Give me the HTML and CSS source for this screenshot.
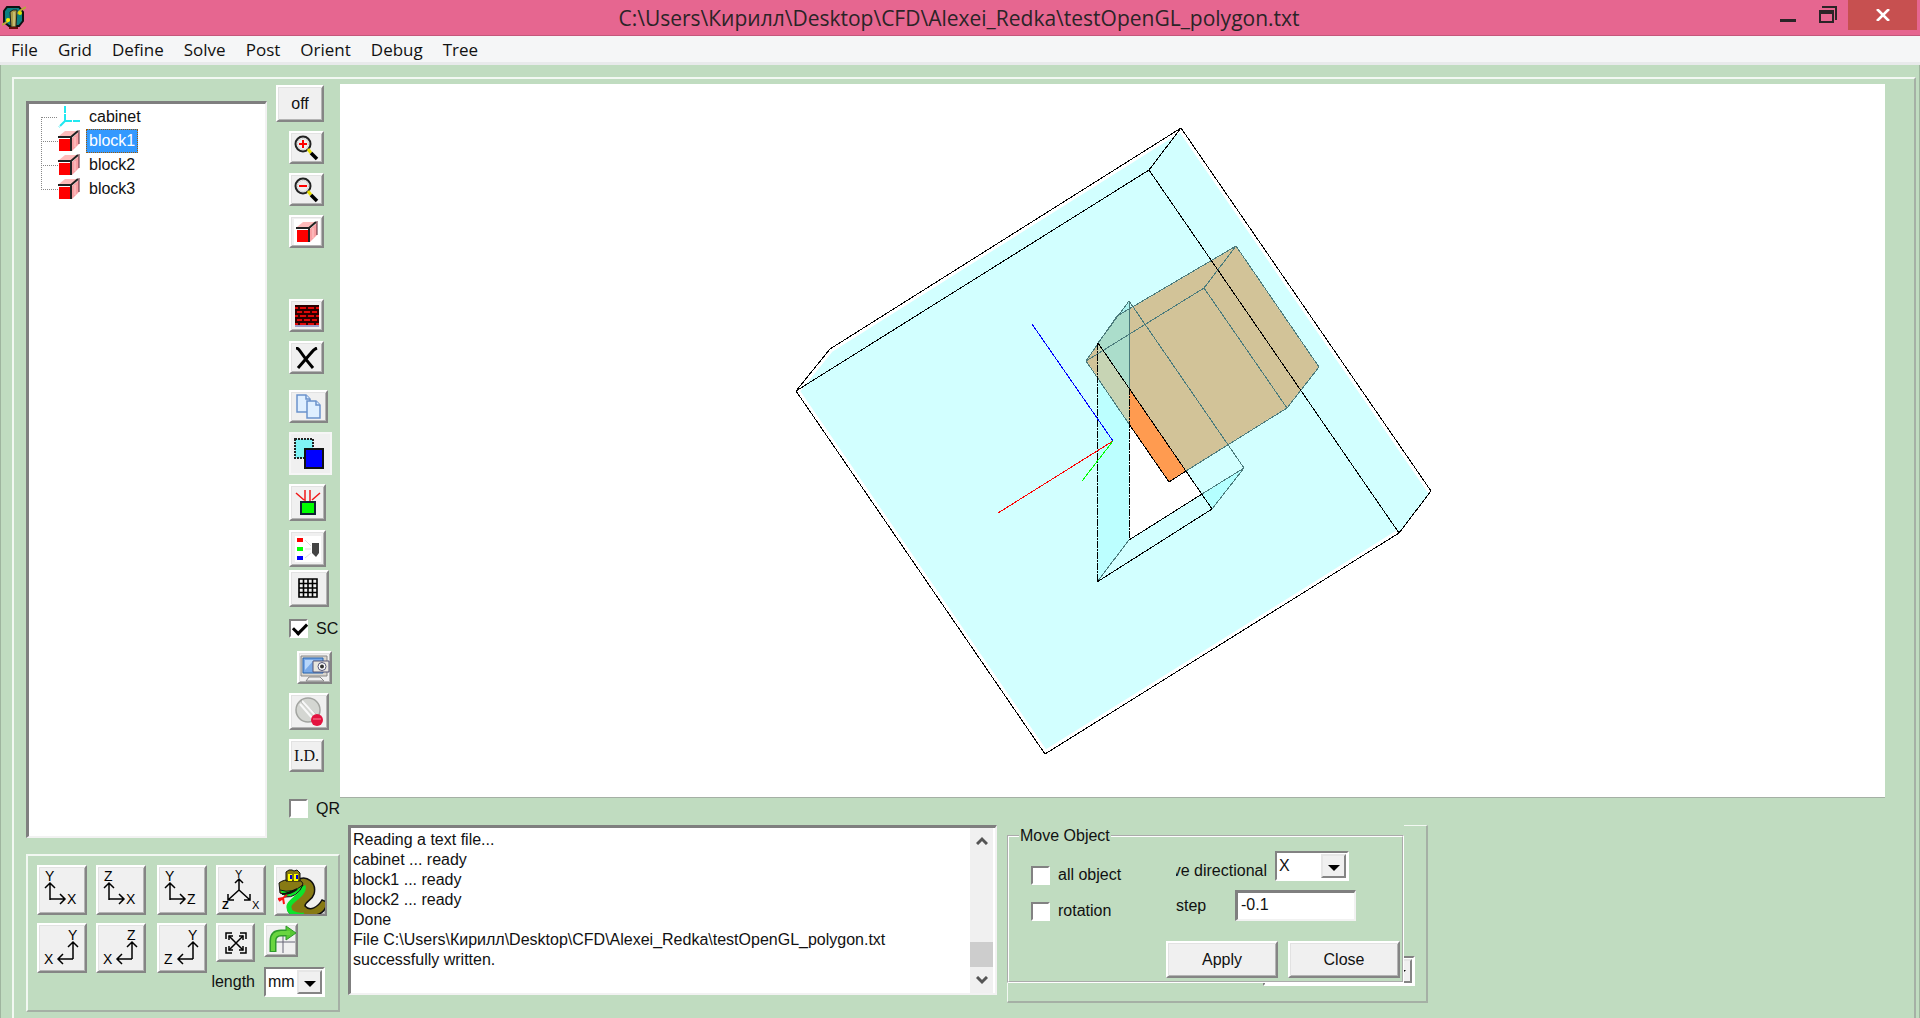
FILE: index.html
```html
<!DOCTYPE html>
<html lang="en">
<head>
<meta charset="utf-8">
<title>C:\Users\Кирилл\Desktop\CFD\Alexei_Redka\testOpenGL_polygon.txt</title>
<link rel="stylesheet" href="styles.css">
</head>
<body>
<svg class="defs" width="0" height="0" aria-hidden="true">
  <defs>
    <symbol id="cube" viewBox="0 0 22 22">
      <path d="M1 6 7 1h14l-6 5z" fill="#fbb"/>
      <path d="M14 8l7-6v12l-7 7z" fill="#f9a0a4"/>
      <path d="M17 7v10" stroke="#fcc" stroke-width="1"/>
      <path d="M1 9h11v12H1z" fill="#f00"/>
      <path d="M0 7h13v14M13 7l7-6" fill="none" stroke="#222" stroke-width="2"/>
      <path d="M21 0v14" stroke="#5a2030"/>
    </symbol>
    <symbol id="lens" viewBox="0 0 26 26">
      <circle cx="9" cy="9" r="7.500" fill="#eee" stroke="#222" stroke-width="2"/>
      <circle cx="9" cy="9" r="5.500" fill="none" stroke="#bbb" stroke-dasharray="1 1"/>
      <path d="M14 14l3 4" stroke="#e8e000" stroke-width="3"/>
      <path d="M17 18l6 6" stroke="#000" stroke-width="3.500"/>
    </symbol>
  </defs>
</svg>

<header class="titlebar">
  <svg class="app-icon" viewBox="0 0 24 24" aria-hidden="true">
    <path d="M5 2h12l4 5v9l-4 5H7l-5-4V6z" fill="#0b7f80" stroke="#111" stroke-width="2"/>
    <path d="M0 20l5-3 14-12 5-3" stroke="#b9a93a" stroke-width="2" fill="none"/>
    <path d="M8 7l3-2h4l-1 17H9z" fill="#a89a48" stroke="#222"/>
    <path d="M12 7v14" stroke="#e6dc9a"/>
    <circle cx="6" cy="15" r="2" fill="#f4f400"/><circle cx="18" cy="8" r="2" fill="#dde000"/>
    <path d="M7 22h9v2H7z" fill="#6b0d0d"/>
  </svg>
  <h1 class="title">C:\Users\Кирилл\Desktop\CFD\Alexei_Redka\testOpenGL_polygon.txt</h1>
  <div class="window-buttons">
    <button class="win" aria-label="Minimize"><svg width="18" height="16"><path d="M1 12h16v3H1z" fill="#2b2427"/></svg></button>
    <button class="win" aria-label="Restore"><svg width="20" height="18"><path d="M4 1h14v13" fill="none" stroke="#2b2427" stroke-width="2"/><path d="M2 5h13v11H2z" fill="none" stroke="#2b2427" stroke-width="2"/><path d="M1 4h15v4H1z" fill="#2b2427"/></svg></button>
    <button class="win win-close" aria-label="Close window"><svg width="14" height="12"><path d="M1 0l12 12M13 0L1 12" stroke="#fff" stroke-width="2.600"/></svg></button>
  </div>
</header>

<nav class="menubar">
  <a href="#">File</a><a href="#">Grid</a><a href="#">Define</a><a href="#">Solve</a><a href="#">Post</a><a href="#">Orient</a><a href="#">Debug</a><a href="#">Tree</a>
</nav>

<main class="workspace">
  <div class="frame">
    <section class="left">
      <div class="upper">
        <ul class="tree">
          <li><svg class="node-icon" viewBox="0 0 22 22"><path d="M7 0v15M7 15h15M7 15l-6 6" stroke="#22e8f0" stroke-width="2" stroke-dasharray="7 1" fill="none"/></svg><span>cabinet</span></li>
          <li><svg class="node-icon"><use href="#cube"/></svg><span class="selected">block1</span></li>
          <li><svg class="node-icon"><use href="#cube"/></svg><span>block2</span></li>
          <li><svg class="node-icon"><use href="#cube"/></svg><span>block3</span></li>
        </ul>
        <div class="tools">
          <button class="btn off">off</button>
          <button class="btn tool" aria-label="Zoom in"><svg width="26" height="26"><use href="#lens"/><path d="M5 9h8M9 5v8" stroke="#f00" stroke-width="2"/></svg></button>
          <button class="btn tool" aria-label="Zoom out"><svg width="26" height="26"><use href="#lens"/><path d="M5 9h8" stroke="#f00" stroke-width="2"/></svg></button>
          <button class="btn tool" aria-label="Block"><svg class="white" width="26" height="26" viewBox="-2 -2 26 26"><use href="#cube" width="22" height="22"/></svg></button>
          <button class="btn tool group" aria-label="Wall"><svg width="24" height="22" viewBox="0 0 24 22"><path d="M0 0h24v20H0z" fill="#e00808"/><path d="M0 1h24M0 5h24M0 9h24M0 13h24M0 17h24M4 1v4M12 1v4M20 1v4M1 5v4M8 5v4M16 5v4M4 9v4M12 9v4M20 9v4M1 13v4M8 13v4M16 13v4M23 5v4M23 13v4M4 17v3M12 17v3M20 17v3" stroke="#2a0000" stroke-width="1.800"/><path d="M0 21h24" stroke="#4848a0"/></svg></button>
          <button class="btn tool" aria-label="Delete"><svg width="24" height="22"><path d="M1 1q2 0 4 3 6 9 13 17M22 1q-3 1-6 5L3 21" fill="none" stroke="#000" stroke-width="3"/></svg></button>
          <button class="btn tool copy" aria-label="Copy"><svg width="26" height="26" viewBox="0 0 26 26"><g fill="#dfefff" stroke="#6b93cc" stroke-width="1.500"><path d="M1 1h9l4 4v13H1z"/><path d="M10 1v4h4"/><path d="M11 7h9l4 4v13H11z"/><path d="M20 7v4h4"/></g></svg></button>
          <button class="btn tool swap" aria-label="Move object"><svg width="34" height="34" viewBox="0 0 34 34"><path d="M1 2h18v19H1z" fill="#7ff4f6" stroke="#222" stroke-width="2" stroke-dasharray="2 1"/><path d="M11 12h18v19H11z" fill="#00f" stroke="#111" stroke-width="2"/></svg></button>
          <button class="btn tool tall" aria-label="Source"><svg width="28" height="28" viewBox="0 0 28 28"><path d="M2 4l8 7M26 4l-8 7M11 1v11M16 1v11" stroke="#f01818" stroke-width="1.500"/><path d="M7 13h14v12H7z" fill="#0f0" stroke="#123" stroke-width="2"/></svg></button>
          <button class="btn tool tall" aria-label="Legend"><svg class="white" width="26" height="26" viewBox="0 0 26 26"><path d="M2 2h6v4H2z" fill="#f00"/><path d="M2 11h6v4H2z" fill="#0f0"/><path d="M2 20h6v4H2z" fill="#00f"/><path d="M10 4l6 6M10 13h6M10 22l6-5" stroke="#ddd"/><path d="M17 7h7v10l-3 4-4-4z" fill="#444"/></svg></button>
          <button class="btn tool tall wide tight" aria-label="Grid"><svg width="22" height="22"><path d="M1 1h18v18H1zM5.500 1v18M10 1v18M14.500 1v18M1 5.500h18M1 10h18M1 14.500h18" fill="none" stroke="#000" stroke-width="1.600"/></svg></button>
          <label class="check tool-check"><input type="checkbox" checked><span>SC</span></label>
          <button class="btn tool screen" aria-label="Screenshot"><svg width="32" height="30" viewBox="0 0 32 30"><path d="M2 3h26v20H2z" fill="#d8d4cc" stroke="#888"/><path d="M4 5h20v15H4z" fill="#78a9e8" stroke="#2562ad"/><path d="M6 7h9L6 17z" fill="#b8d7fa"/><path d="M14 8h16v11H14z" fill="#e8e6de" stroke="#557"/><circle cx="23" cy="13.500" r="4" fill="#fff" stroke="#557"/><circle cx="23" cy="13.500" r="2" fill="#333"/><path d="M7 28l3-4h11l4 4z" fill="#eee" stroke="#888"/></svg></button>
          <button class="btn tool tall wide" aria-label="Stop"><svg width="30" height="30" viewBox="0 0 30 30"><circle cx="14" cy="13" r="12" fill="#d4d6d2" stroke="#a2a4a0" stroke-width="1.500"/><path d="M7 4l15 14" stroke="#999" stroke-width="1.500"/><path d="M8 4l14 15M6 7l13 15" stroke="#f8f8f8" stroke-width="2"/><circle cx="23" cy="23" r="6" fill="#e3123f"/><path d="M19 22h8" stroke="#ee4a6a" stroke-width="2"/></svg></button>
          <button class="btn tool ident">I.D.</button>
          <label class="check tool-check last"><input type="checkbox"><span>QR</span></label>
        </div>
      </div>

      <div class="orient">
        <button class="btn axis" aria-label="View X Y"><svg width="44" height="44"><text x="5" y="13">Y</text><text x="27" y="36">X</text><path d="M10 32V15M5 20l5-5 5 5M10 31h15M20 26l5 5-5 5"/></svg></button>
        <button class="btn axis" aria-label="View X Z"><svg width="44" height="44"><text x="5" y="13">Z</text><text x="27" y="36">X</text><path d="M10 32V15M5 20l5-5 5 5M10 31h15M20 26l5 5-5 5"/></svg></button>
        <button class="btn axis" aria-label="View Z Y"><svg width="44" height="44"><text x="5" y="13">Y</text><text x="27" y="36">Z</text><path d="M10 32V15M5 20l5-5 5 5M10 31h15M20 26l5 5-5 5"/></svg></button>
        <button class="btn axis" aria-label="Isometric view"><svg width="44" height="44"><text class="s" x="16" y="10">Y</text><text class="s b" x="3" y="41">Z</text><text class="s" x="33" y="41">X</text><path d="M20 22V11M16 15l4-4 4 4M20 22L9 32M9 26v6h6M20 22l11 10M31 26v6h-6"/></svg></button>
        <button class="btn snake" aria-label="Solver"><svg width="52" height="51" viewBox="0 0 52 51"><path d="M21 13C31 7 41 16 38 27C36 34 29 34 29 39C34 45 42 40 46 33L51 35C50 45 43 49 34 48C25 51 14 50 12 43C10 36 20 32 25 28C29 24 27 21 21 23Z" fill="#877a14" stroke="#111" stroke-width="1.500"/><path d="M27 19C30 27 14 33 13 39C12 46 20 49 28 48" fill="none" stroke="#0de32b" stroke-width="5"/><path d="M3 16Q8 12 16 13Q26 12 27 17Q22 26 12 29L4 26Z" fill="#877a14" stroke="#111"/><path d="M4 23Q16 27 27 18Q21 31 9 30" fill="#0de32b" stroke="#111"/><path d="M6 27q9 0 15-5" stroke="#111" stroke-width="2"/><path d="M11 28L3 34M7 31l1 6M7 31l-5 1" stroke="#f11" stroke-width="2"/><path d="M10 14V5l3-2h3l2 1 3-1 3 3v8z" fill="#877a14" stroke="#111"/><path d="M12 7h4v7h-4zM18 7h4v7h-4z" fill="#ff0"/><path d="M14 8h2v4h-2zM20 8h2v4h-2z" fill="#00c"/></svg></button>
        <button class="btn axis" aria-label="View minus X Y"><svg width="44" height="44"><text x="28" y="14">Y</text><text x="4" y="38">X</text><path d="M33 33V16M28 21l5-5 5 5M33 33H18M23 28l-5 5 5 5"/></svg></button>
        <button class="btn axis" aria-label="View minus X Z"><svg width="44" height="44"><text x="28" y="14">Z</text><text x="4" y="38">X</text><path d="M33 33V16M28 21l5-5 5 5M33 33H18M23 28l-5 5 5 5"/></svg></button>
        <button class="btn axis" aria-label="View minus Z Y"><svg width="44" height="44"><text x="28" y="14">Y</text><text x="4" y="38">Z</text><path d="M33 33V16M28 21l5-5 5 5M33 33H18M23 28l-5 5 5 5"/></svg></button>
        <div class="extras">
          <div class="extra-row">
            <button class="btn fit" aria-label="Fit"><svg width="24" height="24"><path d="M2 8V2h6M16 2h6v6M22 16v6h-6M8 22H2v-6" stroke-width="2"/><path d="M5 5l14 14M19 5L5 19" /><path d="M5 9V5h4M15 5h4v4M19 15v4h-4M9 19H5v-4" stroke-width="2"/></svg></button>
            <button class="btn turn" aria-label="Rotate"><svg width="32" height="30" viewBox="0 0 32 30"><path d="M17 10v18M4 17h25" stroke="#667" /><path d="M7 27V16Q7 8 15 8h7" fill="none" stroke="#2f9a2c" stroke-width="7"/><path d="M20 1l10 7-10 7z" fill="#57c832" stroke="#2f9a2c"/><path d="M7 26V16Q7 8 15 8h9" fill="none" stroke="#69d53f" stroke-width="4"/></svg></button>
          </div>
          <div class="length-row">
            <label for="length">length</label>
            <span class="combo"><select id="length"><option>mm</option></select><i class="arrow"></i></span>
          </div>
        </div>
      </div>
    </section>

    <section class="right">
      <div class="view">
        <svg viewBox="340 84 1545 713" role="img" aria-label="Model">
          <path d="M1181 128L1431 491 1399 533 1045 754 796 391 830 349z" fill="#d2ffff"/>
          <path d="M830 349L1181 128 1431 491M1399 533L1045 754 796 391 830 349" fill="none" stroke="#fff" stroke-width="7"/>
          <path d="M1236 246L1319 367 1287 408 1169 482 1086 361 1117 316z" fill="#d2c398" stroke="#e6f3e8"/>
          <path d="M1129 388L1202 494 1129 540z" fill="#fff"/>
          <path d="M1129 388L1186 471 1169 482 1129 424z" fill="#ff9b50"/>
          <path d="M1098 343L1129 301V388z" fill="#96ebe6" fill-opacity=".65"/>
          <path d="M1098 343L1129 388V540L1097 582z" fill="#aaffff" fill-opacity=".55"/>
          <path d="M1098 343L1129 388V424L1098 379z" fill="#d2c398" fill-opacity=".5"/>
          <path d="M1202 494L1244 468 1212 509z" fill="#b4ffff"/>
          <g fill="none" stroke="#4b7b7c" shape-rendering="crispEdges">
            <path d="M1236 246L1319 367 1287 408 1186 471M1129 424L1086 361 1117 316 1236 246 1204 288 1086 361M1204 288L1287 408"/>
            <path d="M1098 343L1129 301 1244 468 1212 509M1244 468L1202 494M1129 301V388M1097 582L1129 540"/>
          </g>
          <g fill="none" stroke="#000" shape-rendering="crispEdges">
            <path d="M1181 128L1431 491 1399 533 1045 754 796 391 830 349zM796 391L1149 170 1181 128M1149 170L1399 533"/>
            <path d="M1098 343L1212 509 1097 582M1129 540L1202 494M1129 424L1169 482 1186 471"/>
            <path d="M1097 343V582M1129 388V540" stroke-dasharray="7 1 2 1"/>
          </g>
          <g fill="none" shape-rendering="crispEdges">
            <path d="M1032 324L1113 441" stroke="#00f"/>
            <path d="M998 513L1113 441" stroke="#f00"/>
            <path d="M1082 481L1113 441" stroke="#0f0"/>
          </g>
        </svg>
      </div>
      <div class="bottom">
        <div class="log">
          <textarea aria-label="Log" readonly>Reading a text file...
cabinet ... ready
block1 ... ready
block2 ... ready
Done
File C:\Users\Кирилл\Desktop\CFD\Alexei_Redka\testOpenGL_polygon.txt
successfully written.</textarea>
          <div class="scrollbar">
            <svg width="12" height="9"><path d="M1 8l5-5 5 5" /></svg>
            <div class="thumb"></div>
            <svg width="12" height="9"><path d="M1 1l5 5 5-5" /></svg>
          </div>
        </div>
        <div class="panel">
          <span class="combo behind"><i class="arrow"></i></span>
          <form class="move">
            <fieldset>
              <legend>Move Object</legend>
              <div class="fields">
                <div class="checks">
                  <label class="check"><input type="checkbox"><span>all object</span></label>
                  <label class="check"><input type="checkbox"><span>rotation</span></label>
                </div>
                <div class="values">
                  <div class="field low">
                    <label class="clip" for="dir"><span>ve directional</span></label>
                    <span class="combo dir"><select id="dir"><option>X</option></select><i class="arrow"></i></span>
                  </div>
                  <div class="field">
                    <label class="step-label" for="step">step</label>
                    <input class="step" id="step" type="text" value="-0.1">
                  </div>
                </div>
              </div>
              <div class="actions">
                <button class="btn action" type="button">Apply</button>
                <button class="btn action" type="button">Close</button>
              </div>
            </fieldset>
          </form>
        </div>
      </div>
    </section>
  </div>
</main>
</body>
</html>
```
FILE: styles.css
```css
* { box-sizing: border-box; }
body {
  margin: 0;
  min-height: 100vh;
  display: flex;
  flex-direction: column;
  background: #c0dcc0;
  color: #111;
  font: 16px/20px "Liberation Sans", Arial, sans-serif;
}
button, input, select, textarea { font: inherit; color: inherit; margin: 0; padding: 0; }
svg { display: block; }
.defs { position: absolute; }

/* title bar */
.titlebar {
  display: flex;
  align-items: flex-start;
  height: 36px;
  background: #e66690;
  border-bottom: 1px solid #c4577b;
}
.app-icon { width: 24px; height: 24px; margin: 5px 0 0 2px; }
.title {
  flex: 1;
  margin: 0;
  padding-left: 124px;
  text-align: center;
  font: 21px/36px "Open Sans", "Noto Sans", sans-serif;
  color: #2b2427;
  white-space: nowrap;
}
.window-buttons { display: flex; margin-right: 3px; }
.win {
  display: grid;
  place-items: center;
  width: 40px;
  height: 30px;
  border: 0;
  background: none;
}
.win-close { width: 69px; background: #c75050; }

/* menu */
.menubar {
  display: flex;
  gap: 20px;
  height: 29px;
  padding-left: 11px;
  border-bottom: 3px solid #e8eaeb;
  background: #f5f6f7;
  font: 17px/27px "Open Sans", "Noto Sans", sans-serif;
}
.menubar a { color: #111; text-decoration: none; }

/* shared bevels */
.btn {
  display: grid;
  place-items: center;
  flex: none;
  overflow: hidden;
  background: #f0f0f0;
  border: 2px solid;
  border-color: #fff #858585 #858585 #fff;
  box-shadow: inset 1px 1px #e2e2e2, inset -1px -1px #b4b4b4;
}
.combo {
  position: relative;
  flex: none;
  display: block;
  width: 61px;
  height: 30px;
  border: 2px solid;
  border-color: #828282 #fff #fff #828282;
  background: #fff;
}
.combo select {
  appearance: none;
  display: block;
  width: 100%;
  height: 100%;
  padding-left: 2px;
  border: 0;
  background: none;
}
.arrow {
  position: absolute;
  top: 1px;
  right: 1px;
  bottom: 1px;
  width: 25px;
  background: #f0f0f0;
  border: 2px solid;
  border-color: #e6e6e6 #858585 #858585 #e6e6e6;
  pointer-events: none;
}
.arrow::after {
  content: "";
  position: absolute;
  left: 5px;
  top: 9px;
  border: 6px solid transparent;
  border-top-color: #000;
  border-bottom: 0;
}
.check { display: flex; align-items: center; gap: 8px; }
.check input {
  appearance: none;
  flex: none;
  width: 19px;
  height: 19px;
  border: 2px solid;
  border-color: #828282 #fff #fff #828282;
  background: #fff;
}
.check input:checked::after {
  content: "";
  display: block;
  width: 11px;
  height: 6px;
  margin: 2px;
  border: solid #000;
  border-width: 0 0 3px 3px;
  transform: rotate(-45deg);
}

/* work area */
.workspace {
  flex: 1;
  display: flex;
  padding: 12px 3px 0 11px;
  border: solid #9fb59f;
  border-width: 0 1px 1px;
}
.frame {
  flex: 1;
  display: flex;
  min-width: 0;
  padding: 5px 29px 6px 12px;
  border: solid;
  border-width: 2px 2px 1px;
  border-color: #f2f8f2 #a5b0a5 #a5b0a5 #f2f8f2;
}
.left { display: flex; flex-direction: column; gap: 16px; width: 314px; flex: none; }
.upper { flex: 1; display: flex; }
.tree {
  width: 241px;
  margin: 17px 0 0;
  padding: 1px 0 0 12px;
  list-style: none;
  background: #fff;
  border: solid;
  border-width: 3px 2px 2px 3px;
  border-color: #7f7f7f #f2f2f2 #f2f2f2 #7f7f7f;
}
.tree li { position: relative; display: flex; align-items: center; height: 24px; padding-left: 17px; }
.tree li::before {
  content: "";
  position: absolute;
  left: 0;
  top: -12px;
  width: 16px;
  height: 24px;
  border: dotted #888;
  border-width: 0 0 1px 1px;
}
.tree li:first-child::before { top: 11px; height: 1px; border-left: 0; }
.node-icon { width: 22px; height: 22px; margin-right: 6px; }
.tree span { padding: 2px 3px; white-space: nowrap; }
.tree .selected { background: #3399ff; color: #fff; outline: 1px dotted #a05a00; outline-offset: -1px; }

.tools {
  display: flex;
  flex-direction: column;
  align-items: flex-start;
  gap: 9px;
  padding: 1px 0 0 22px;
  overflow: hidden;
}
.off { width: 48px; height: 37px; margin-left: -13px; }
.tool { width: 35px; height: 33px; }
.tool.group { margin-top: 42px; }
.copy { width: 39px; margin-top: 7px; }
.swap { width: 43px; height: 43px; border-color: #f6f6f6; box-shadow: none; }
.tall { width: 37px; height: 37px; }
.wide { width: 40px; }
.tight { margin-top: -6px; }
.white { background: #fff; }
.tool-check { height: 19px; margin: 3px 0; }
.tool-check.last { margin-top: 18px; }
.screen { margin: 1px 0 0 8px; }
.ident { font: 16px/20px "Liberation Serif", serif; }

.orient {
  display: grid;
  grid-template-columns: 59px 61px 59px 58px 53px;
  row-gap: 7px;
  justify-items: start;
  align-content: start;
  height: 158px;
  padding: 9px 0 0 9px;
  border: 2px solid;
  border-color: #f2f8f2 #a5b0a5 #a5b0a5 #f2f8f2;
}
.axis { width: 50px; height: 50px; }
.axis path, .fit path { fill: none; stroke: #000; stroke-width: 1.5; }
.axis text { font-size: 14px; }
.axis .s { font-size: 11px; }
.axis .b { font-weight: bold; }
.snake { width: 53px; height: 51px; }
.extras { grid-column: 4 / 6; width: 109px; }
.extra-row { display: flex; gap: 9px; }
.fit { width: 39px; height: 39px; }
.turn { width: 34px; height: 34px; }
.length-row { display: flex; justify-content: flex-end; align-items: center; gap: 9px; margin-top: 5px; }

/* model view and bottom row */
.right { flex: 1; min-width: 0; display: flex; flex-direction: column; }
.view { flex: 1; min-height: 0; background: #fff; border-bottom: 1px solid #a5b0a5; }
.view svg { width: 100%; }
.bottom { display: flex; align-items: flex-start; gap: 10px; margin: 27px 0 9px 8px; }
.log {
  flex: 0 1 649px;
  display: flex;
  height: 170px;
  background: #fff;
  border: solid;
  border-width: 3px 2px 2px 3px;
  border-color: #7f7f7f #f2f2f2 #f2f2f2 #7f7f7f;
}
.log textarea {
  flex: 1;
  min-width: 0;
  padding: 2px;
  border: 0;
  resize: none;
  overflow: hidden;
  background: none;
  line-height: 20px;
}
.scrollbar {
  display: flex;
  flex-direction: column;
  align-items: center;
  width: 23px;
  margin-right: 2px;
  padding: 8px 0;
  background: #f0f0f0;
}
.scrollbar path { fill: none; stroke: #555; stroke-width: 3; }
.thumb { width: 23px; height: 25px; margin: auto 0 9px; background: #cdcdcd; }

.panel {
  position: relative;
  flex: 0 1 421px;
  height: 178px;
  border: solid;
  border-width: 1px 2px 2px 1px;
  border-color: #f2f8f2 #a5b0a5 #a5b0a5 #f2f8f2;
}
.behind { position: absolute; right: 11px; bottom: 15px; width: 152px; }
.move { position: relative; width: 397px; margin: -1px 0 0 -1px; padding-top: 1px; background: #c0dcc0; }
fieldset {
  height: 157px;
  min-width: 0;
  margin: 0;
  padding: 4px 2px 2px 22px;
  border: 2px groove #fff;
}
legend { margin-left: -12px; padding: 0 1px; }
.fields { display: grid; grid-template-columns: 145px 1fr; }
.checks { display: grid; align-content: start; gap: 16px; padding-top: 15px; }
.values { display: grid; gap: 9px; }
.field { display: flex; align-items: center; height: 31px; }
.field.low { align-items: flex-end; }
.clip { display: flex; justify-content: flex-end; width: 91px; margin-right: 8px; overflow: hidden; white-space: nowrap; }
.combo.dir { width: 74px; }
.step-label { width: 59px; }
.step {
  width: 121px;
  height: 31px;
  padding: 0 3px 2px;
  border: solid;
  border-width: 3px 2px 2px 3px;
  border-color: #7f7f7f #f2f2f2 #f2f2f2 #7f7f7f;
  background: #fff;
}
.actions { display: flex; justify-content: flex-end; gap: 10px; margin-top: 20px; }
.action { width: 112px; height: 37px; }
```
